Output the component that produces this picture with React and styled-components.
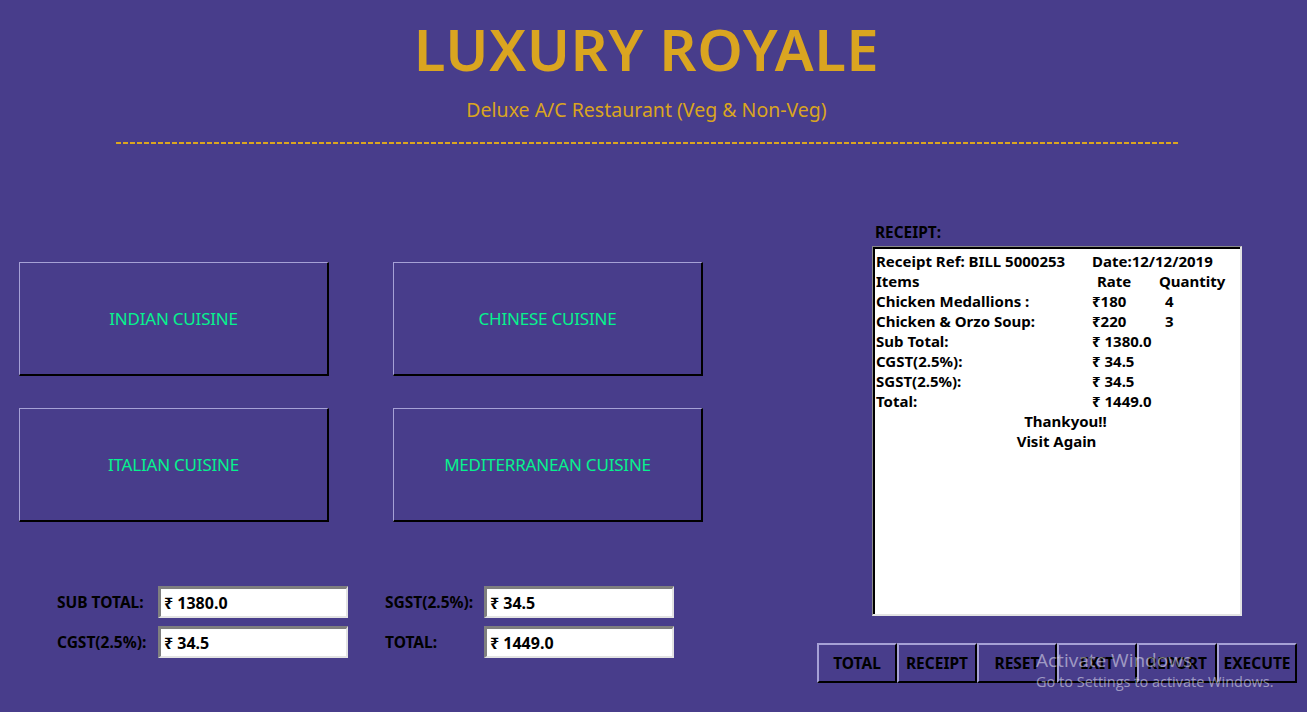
import React from "react";
import styled, { createGlobalStyle } from "styled-components";

const GlobalStyle = createGlobalStyle`
  html, body {
    margin: 0;
    padding: 0;
    background: #483d8b;
  }
  body {
    font-family: "Noto Sans", "DejaVu Sans", sans-serif;
  }
`;

const Page = styled.div`
  position: relative;
  width: 1307px;
  height: 712px;
  overflow: hidden;
  background: #483d8b;
`;

const Header = styled.header`
  width: 1293px;
  padding-top: 17px;
  display: flex;
  flex-direction: column;
  align-items: center;
`;

const Title = styled.h1`
  margin: 0;
  height: 64px;
  font: 600 58px/64px "Noto Sans", sans-serif;
  color: #daa520;
  letter-spacing: 0.5px;
`;

const Subtitle = styled.div`
  margin-top: 17px;
  font: 19.5px/23px "Noto Sans", sans-serif;
  color: #daa520;
`;

const Rule = styled.div`
  width: 1062px;
  height: 2px;
  margin-top: 21px;
  background: repeating-linear-gradient(90deg, #daa520 0 5px, transparent 5px 7px);
`;

const Content = styled.main`
  display: flex;
  margin-top: 79px;
`;

const LeftColumn = styled.section`
  width: 798px;
  padding: 39px 0 0 19px;
`;

const CuisineGrid = styled.div`
  display: grid;
  grid-template-columns: 310px 310px;
  grid-auto-rows: 114px;
  column-gap: 64px;
  row-gap: 32px;
`;

const CuisineButton = styled.button`
  box-sizing: border-box;
  background: transparent;
  border-style: solid;
  border-width: 1px 2px 2px 1px;
  border-color: #a6a1d6 #000 #000 #a6a1d6;
  color: #06f28e;
  font: 17px "Noto Sans", sans-serif;
  letter-spacing: -0.2px;
  cursor: pointer;
`;

const Totals = styled.div`
  display: grid;
  grid-template-columns: 101px 227px 99px 190px;
  grid-auto-rows: 32px;
  row-gap: 8px;
  margin: 64px 0 0 38px;
`;

const FieldLabel = styled.label`
  align-self: center;
  font: 700 15.5px "Noto Sans", sans-serif;
  color: #000;
  white-space: nowrap;
`;

const Field = styled.div`
  box-sizing: border-box;
  width: 190px;
  height: 32px;
  display: flex;
  align-items: center;
  padding-left: 3px;
  background: #fff;
  border-style: solid;
  border-width: 3px 2px 2px 3px;
  border-color: #7f7f7f #e3e3e3 #e3e3e3 #7f7f7f;
  font: 700 16px "Noto Sans", sans-serif;
  color: #000;
`;

const RightColumn = styled.section`
  width: 490px;
`;

const ReceiptLabel = styled.div`
  padding-left: 58px;
  height: 23px;
  font: 700 15.4px/20px "Noto Sans", sans-serif;
  color: #000;
`;

const ReceiptBox = styled.div`
  box-sizing: border-box;
  width: 370px;
  height: 370px;
  margin-left: 55px;
  padding: 4px 3px;
  background: #fff;
  border-style: solid;
  border-width: 1px 2px 2px 1px;
  border-color: #8a8a8a #e3e3e3 #e3e3e3 #8a8a8a;
  box-shadow: inset 2px 2px 0 #000;
`;

const ReceiptRow = styled.div`
  display: grid;
  grid-template-columns: 216px 67px auto;
  height: 20px;
  font: 700 15px/20px "Noto Sans", sans-serif;
  color: #000;
  white-space: nowrap;
`;

const Cell = styled.span`
  padding-left: ${(p) => p.$indent || 0}px;
`;

const ReceiptNote = styled.div`
  text-align: center;
  padding-left: ${(p) => p.$shift || 0}px;
  font: 700 15px/20px "Noto Sans", sans-serif;
  color: #000;
`;

const ButtonBar = styled.div`
  display: flex;
  margin-top: 27px;
`;

const ActionButton = styled.button`
  box-sizing: border-box;
  width: 80px;
  height: 40px;
  padding: 0;
  background: #483d8b;
  border-style: solid;
  border-width: 2px;
  border-color: #a6a1d6 #000 #000 #a6a1d6;
  font: 700 15.5px "Noto Sans", sans-serif;
  color: #000;
  white-space: nowrap;
  cursor: pointer;
`;

const Watermark = styled.div`
  position: absolute;
  left: 1036px;
  top: 648px;
  color: rgba(235, 235, 245, 0.55);
  font-family: "Open Sans", "Noto Sans", sans-serif;
  pointer-events: none;
`;

const WatermarkTitle = styled.div`
  font-size: 19px;
  line-height: 24px;
`;

const WatermarkText = styled.div`
  font-size: 14.5px;
  line-height: 20px;
`;

const cuisines = ["INDIAN CUISINE", "CHINESE CUISINE", "ITALIAN CUISINE", "MEDITERRANEAN CUISINE"];

const totals = [
  ["SUB TOTAL:", "₹ 1380.0", "SGST(2.5%):", "₹ 34.5"],
  ["CGST(2.5%):", "₹ 34.5", "TOTAL:", "₹ 1449.0"]
];

const receiptRows = [
  ["Receipt Ref: BILL 5000253", "Date:12/12/2019", ""],
  ["Items", "Rate", "Quantity", 5],
  ["Chicken Medallions :", "₹180", "4", 0, 6],
  ["Chicken & Orzo Soup:", "₹220", "3", 0, 6],
  ["Sub Total:", "₹ 1380.0", ""],
  ["CGST(2.5%):", "₹ 34.5", ""],
  ["SGST(2.5%):", "₹ 34.5", ""],
  ["Total:", "₹ 1449.0", ""]
];

const actions = ["TOTAL", "RECEIPT", "RESET", "EXIT", "REPORT", "EXECUTE"];

export default function App() {
  return (
    <Page>
      <GlobalStyle />
      <Header>
        <Title>LUXURY ROYALE</Title>
        <Subtitle>Deluxe A/C Restaurant (Veg &amp; Non-Veg)</Subtitle>
        <Rule />
      </Header>

      <Content>
        <LeftColumn>
          <CuisineGrid>
            {cuisines.map((c) => (
              <CuisineButton key={c}>{c}</CuisineButton>
            ))}
          </CuisineGrid>

          <Totals>
            {totals.map((row) => (
              <React.Fragment key={row[0]}>
                <FieldLabel>{row[0]}</FieldLabel>
                <Field>{row[1]}</Field>
                <FieldLabel>{row[2]}</FieldLabel>
                <Field>{row[3]}</Field>
              </React.Fragment>
            ))}
          </Totals>
        </LeftColumn>

        <RightColumn>
          <ReceiptLabel>RECEIPT:</ReceiptLabel>
          <ReceiptBox>
            {receiptRows.map(([a, b, c, bIndent, cIndent]) => (
              <ReceiptRow key={a}>
                <Cell>{a}</Cell>
                <Cell $indent={bIndent}>{b}</Cell>
                <Cell $indent={cIndent}>{c}</Cell>
              </ReceiptRow>
            ))}
            <ReceiptNote $shift={18}>Thankyou!!</ReceiptNote>
            <ReceiptNote>Visit Again</ReceiptNote>
          </ReceiptBox>

          <ButtonBar>
            {actions.map((a) => (
              <ActionButton key={a}>{a}</ActionButton>
            ))}
          </ButtonBar>
        </RightColumn>
      </Content>

      <Watermark>
        <WatermarkTitle>Activate Windows</WatermarkTitle>
        <WatermarkText>Go to Settings to activate Windows.</WatermarkText>
      </Watermark>
    </Page>
  );
}
